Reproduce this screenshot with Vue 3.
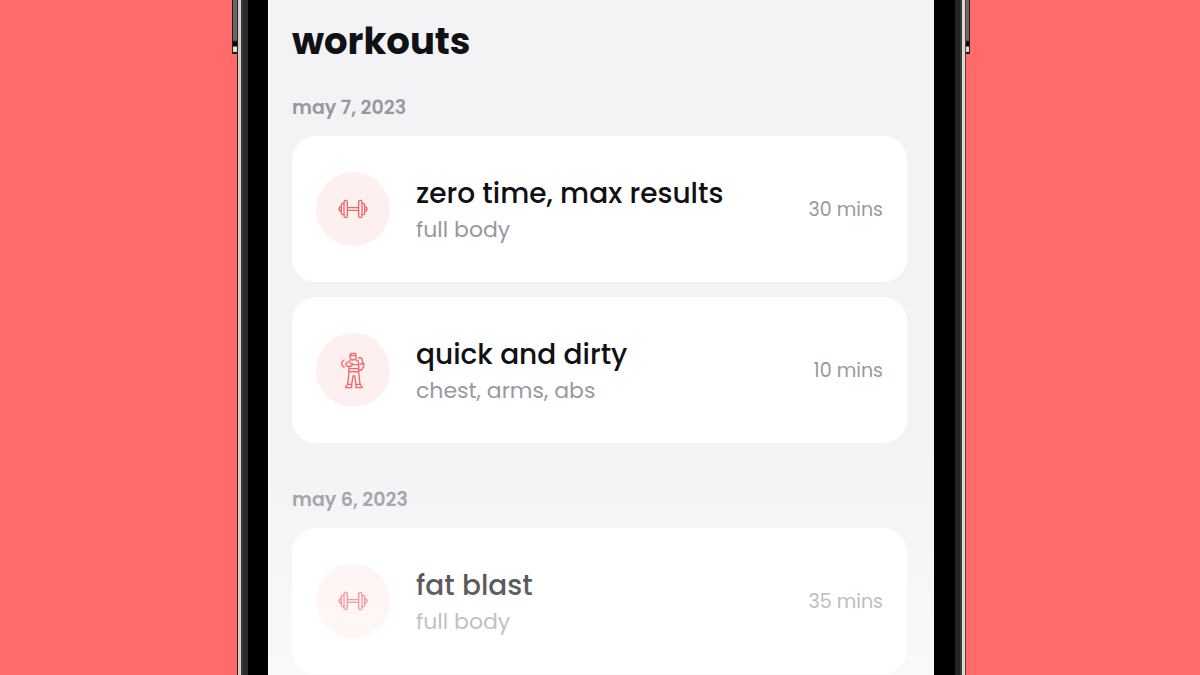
<script setup>
const days = [
  {
    date: 'may 7, 2023',
    workouts: [
      { name: 'zero time, max results', target: 'full body', duration: '30 mins', icon: 'dumbbell' },
      { name: 'quick and dirty', target: 'chest, arms, abs', duration: '10 mins', icon: 'athlete' }
    ]
  },
  {
    date: 'may 6, 2023',
    workouts: [
      { name: 'fat blast', target: 'full body', duration: '35 mins', icon: 'dumbbell' }
    ]
  }
]
</script>

<template>
  <div class="stage">
    <div class="phone">
      <span class="side-button left"></span>
      <span class="side-button right"></span>

      <main class="screen">
        <h1>workouts</h1>

        <section v-for="day in days" :key="day.date" class="day">
          <h2>{{ day.date }}</h2>
          <ul class="workout-list">
            <li v-for="workout in day.workouts" :key="workout.name" class="card">
              <span class="icon-circle">
                <svg v-if="workout.icon === 'dumbbell'" class="dumbbell" viewBox="0 0 90 60" aria-hidden="true">
                  <rect x="18" y="4" width="10" height="52" rx="5" />
                  <rect x="62" y="4" width="10" height="52" rx="5" />
                  <path d="M18 13h-3q-5 0-5 5v24q0 5 5 5h3" />
                  <path d="M72 13h3q5 0 5 5v24q0 5-5 5h-3" />
                  <path d="M10 23q-7 1-7 7t7 7M80 23q7 1 7 7t-7 7" />
                  <path d="M28 26h34M28 34h34" />
                </svg>
                <svg v-else class="athlete" viewBox="0 0 81 111" aria-hidden="true">
                  <!-- head -->
                  <path d="M30 8q2-5 9-3q6-3 9 2v12q-2 5-9 5t-9-5zM30 11h18" />
                  <!-- arms and torso -->
                  <path d="M32 24q-2 5-7 5l-8 6q0 7 7 8l11-1 2-8h-7" />
                  <path d="M48 24q7 2 8 9v26H27V43M38 38h18M28 50h28" />
                  <path d="M56 18q10-3 11 7v6q6 2 4 8q3 5-3 8q2 8-12 7" />
                  <path d="M61 36h8" />
                  <!-- arc of the swing -->
                  <path d="M12 24Q-2 35 12 46" />
                  <!-- legs and shoes -->
                  <path d="M27 59l-4 38h12l4-25h5l4 25h12l-4-38z" />
                  <path d="M23 97l-6 7v3h18V97M60 97l6 7v3H48V97" />
                </svg>
              </span>
              <div class="details">
                <h3>{{ workout.name }}</h3>
                <p>{{ workout.target }}</p>
              </div>
              <span class="duration">{{ workout.duration }}</span>
            </li>
          </ul>
        </section>

        <div class="fade"></div>
      </main>
    </div>
  </div>
</template>

<style>
body {
  margin: 0;
  background: #ff6b6b;
}
</style>

<style scoped>
.stage {
  display: grid;
  grid-template-columns: 237fr 729fr 234fr;
  min-height: 100vh;
  background: #ff6b6b;
  font-family: Poppins, Inter, "Liberation Sans", sans-serif;
}

.phone {
  position: relative;
  grid-column: 2;
  display: flex;
  padding: 0 32px 0 31px;
  background:
    linear-gradient(90deg, #29221f 1px, #d5d0c7 1px 4px, #3d3c39 4px 6px, #2b2b29 6px 11px, transparent 11px) left / 50% 100% no-repeat,
    linear-gradient(270deg, #33201f 1px, #49413c 1px 2px, #ded8d3 2px 5px, #3a3836 5px 7px, #252423 7px 12px, transparent 12px) right / 50% 100% no-repeat,
    #000;
}

.side-button {
  position: absolute;
  top: 0;
  box-sizing: border-box;
  width: 5px;
  height: 54px;
  border: solid #211d1b;
  background: linear-gradient(180deg, #6b6663 40px, #080808 42px 46px, #e6e0dc 47px 51px, #8a8480 53px);
}

.left {
  right: 100%;
  border-width: 0 0 2px 1px;
}

.right {
  left: 100%;
  width: 4px;
  border-width: 0 1px 2px 0;
}

.screen {
  position: relative;
  flex: 1;
  min-width: 0;
  padding: 13px 27px 0 24px;
  background: #f3f3f6;
  box-shadow: inset 1px 0 #fff;
}

h1,
h2,
h3,
p,
ul {
  margin: 0;
  padding: 0;
}

h1 {
  color: #111114;
  font-size: 37px;
  font-weight: 700;
  line-height: 56px;
}

h2 {
  margin-bottom: 16px;
  color: #98989f;
  font-size: 19px;
  font-weight: 600;
  line-height: 24px;
}

.day {
  margin-top: 27px;
}

.day + .day {
  margin-top: 45px;
}

.workout-list {
  display: flex;
  flex-direction: column;
  gap: 15px;
  list-style: none;
}

.card {
  display: flex;
  align-items: center;
  gap: 26px;
  box-sizing: border-box;
  min-height: 146px;
  padding: 24px;
  border-radius: 24px;
  background: #fff;
}

.icon-circle {
  display: flex;
  flex: none;
  align-items: center;
  justify-content: center;
  width: 74px;
  height: 74px;
  border-radius: 50%;
  background: #fff0f0;
}

svg {
  fill: none;
  stroke: #f2666b;
  stroke-width: 4;
  stroke-linecap: round;
  stroke-linejoin: round;
}

.dumbbell {
  width: 30px;
  height: 20px;
}

.athlete {
  width: 27px;
  height: 37px;
  overflow: visible;
}

.details {
  flex: 1;
  min-width: 0;
  padding-top: 4px;
}

h3 {
  color: #111114;
  font-size: 28px;
  font-weight: 500;
  line-height: 38px;
}

p {
  color: #98989f;
  font-size: 22px;
  line-height: 34px;
}

.duration {
  color: #98989f;
  font-size: 19px;
  white-space: nowrap;
}

/* the list fades out towards the bottom of the screen */
.fade {
  position: absolute;
  right: 0;
  bottom: 0;
  left: 0;
  height: 240px;
  background: linear-gradient(180deg, rgba(255, 255, 255, 0), rgba(255, 255, 255, 0.5));
  pointer-events: none;
}
</style>
